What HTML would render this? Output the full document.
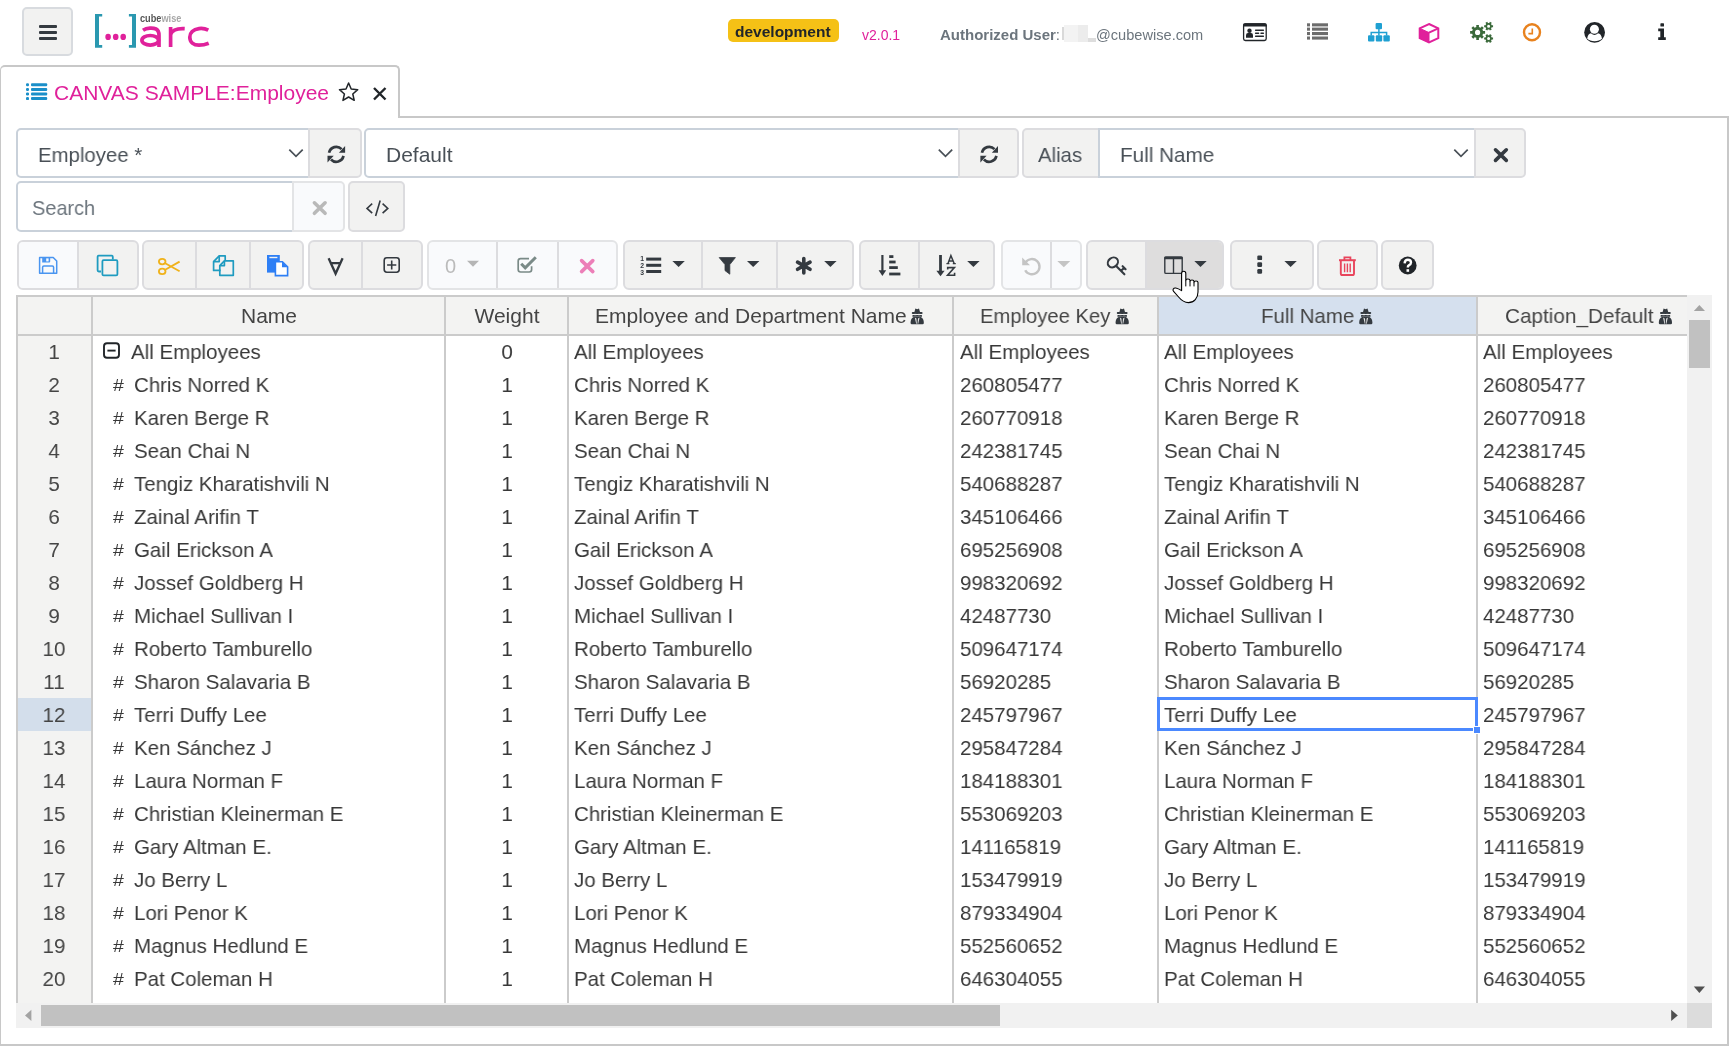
<!DOCTYPE html>
<html><head><meta charset="utf-8"><title>ARC</title>
<style>
*{box-sizing:border-box;margin:0;padding:0}
html,body{width:1734px;height:1056px;overflow:hidden;background:#fff;font-family:"Liberation Sans",sans-serif;color:#333}
.a{position:absolute}
svg{position:absolute;overflow:visible}
.btn{position:absolute;background:#f2f2f1;border:2px solid #dcdcdf;border-radius:5px}
.sel{position:absolute;background:#fff;border:2px solid #c9d1da;border-radius:5px}
.t{position:absolute;white-space:nowrap;line-height:1;will-change:transform}
.grp{position:absolute;top:240px;height:50px;border:2px solid #dcdcdf;border-radius:6px;background:#f2f2f1;overflow:hidden}
.grp.dis{background:#f9fafc;border-color:#e3e4e6}
.sep{position:absolute;top:0;bottom:0;width:2px;background:#dcdcdf}
.grid{position:absolute;left:16px;top:295px;width:1671px;height:708px;overflow:hidden;background:#fff}
.row{position:absolute;left:0;height:33px;width:1671px;line-height:33px;font-size:20px;color:#333;white-space:nowrap}
.row span{position:absolute;top:0}
.hdr{position:absolute;top:2px;height:37px;line-height:37px;font-size:20px;color:#444;text-align:center;background:#f3f3f2;white-space:nowrap}
.vl{position:absolute;top:0;width:2px;height:708px;background:#cbcbcb}
</style></head><body>
<div class="a" style="left:22px;top:7px;width:51px;height:49px;background:#f2f2f1;border:2px solid #d8dbdf;border-radius:5px"></div>
<div class="a" style="left:728px;top:19px;width:111px;height:23px;background:#f5c116;border-radius:5px"></div>
<div class="t" style="left:735px;top:23.68px;font-size:15.5px;color:#212529;font-weight:bold;">development</div>
<div class="t" style="left:861.5px;top:28.15px;font-size:14px;color:#e0219b;font-weight:normal;">v2.0.1</div>
<div class="t" style="left:940px;top:27.30px;font-size:15px;color:#6c757d;font-weight:bold;">Authorized User<span style="font-weight:normal">:</span></div>
<div class="a" style="left:1062px;top:27px;width:2px;height:13px;background:#d9d9d9;"></div>
<div class="a" style="left:1064px;top:25px;width:14px;height:17px;background:#f3f3f3;"></div>
<div class="a" style="left:1078px;top:25px;width:10px;height:17px;background:#ececec;"></div>
<div class="a" style="left:1088px;top:38px;width:8px;height:4px;background:#dddddd;"></div>
<div class="t" style="left:1096px;top:27.64px;font-size:14.6px;color:#6c757d;font-weight:normal;">@cubewise.com</div>
<div class="a" style="left:0px;top:116px;width:1729px;height:930px;background:#fff;border:2px solid #c8c8c8;border-left-width:1px"></div>
<div class="a" style="left:0px;top:65px;width:400px;height:53px;background:#fff;border:2px solid #c8c8c8;border-left-width:1px;border-bottom:none;border-radius:5px 5px 0 0"></div>
<div class="t" style="left:54px;top:81.82px;font-size:21px;color:#e0219b;font-weight:normal;">CANVAS SAMPLE:Employee</div>
<div class="a" style="left:16px;top:128px;width:294px;height:50px;background:#fff;border:2px solid #c9d1da;border-radius:5px 0 0 5px"></div>
<div class="t" style="left:38px;top:144.22px;font-size:21px;color:#495057;font-weight:normal;transform:scaleX(0.97);transform-origin:0 0">Employee *</div>
<div class="a" style="left:308px;top:128px;width:54px;height:50px;background:#f2f2f1;border:2px solid #dcdcdf;border-radius:0 5px 5px 0"></div>
<div class="a" style="left:364px;top:128px;width:596px;height:50px;background:#fff;border:2px solid #c9d1da;border-radius:5px 0 0 5px"></div>
<div class="t" style="left:386px;top:144.22px;font-size:21px;color:#495057;font-weight:normal;">Default</div>
<div class="a" style="left:958px;top:128px;width:61px;height:50px;background:#f2f2f1;border:2px solid #dcdcdf;border-radius:0 5px 5px 0"></div>
<div class="a" style="left:1022px;top:128px;width:78px;height:50px;background:#f2f2f1;border:2px solid #dcdcdf;border-radius:5px 0 0 5px"></div>
<div class="t" style="left:1038px;top:144.22px;font-size:21px;color:#495057;font-weight:normal;transform:scaleX(0.97);transform-origin:0 0">Alias</div>
<div class="a" style="left:1098px;top:128px;width:378px;height:50px;background:#fff;border:2px solid #c9d1da"></div>
<div class="t" style="left:1120px;top:144.22px;font-size:21px;color:#495057;font-weight:normal;transform:scaleX(0.985);transform-origin:0 0">Full Name</div>
<div class="a" style="left:1474px;top:128px;width:52px;height:50px;background:#f2f2f1;border:2px solid #dcdcdf;border-radius:0 5px 5px 0"></div>
<div class="a" style="left:16px;top:181px;width:278px;height:51px;background:#fff;border:2px solid #c9d1da;border-radius:5px 0 0 5px"></div>
<div class="t" style="left:31.5px;top:196.92px;font-size:21px;color:#6c757d;font-weight:normal;transform:scaleX(0.95);transform-origin:0 0">Search</div>
<div class="a" style="left:292px;top:181px;width:53px;height:51px;background:#f9fafc;border:2px solid #e3e4e6;border-radius:0 5px 5px 0"></div>
<div class="a" style="left:348px;top:181px;width:57px;height:51px;background:#f2f2f1;border:2px solid #dcdcdf;border-radius:5px"></div>
<div class="grp" style="left:17px;width:122px"><div class="a" style="left:0;top:0;width:58px;bottom:0;background:#f9fafc"></div><div class="sep" style="left:58px"></div></div>
<div class="grp" style="left:142px;width:162px"><div class="sep" style="left:51px"></div><div class="sep" style="left:105px"></div></div>
<div class="grp" style="left:308px;width:115px"><div class="sep" style="left:51px"></div></div>
<div class="grp dis" style="left:427px;width:191px"><div class="sep" style="left:67px"></div><div class="sep" style="left:128px"></div></div>
<div class="grp" style="left:623px;width:231px"><div class="sep" style="left:76px"></div><div class="sep" style="left:151px"></div></div>
<div class="grp" style="left:859px;width:136px"><div class="sep" style="left:57px"></div></div>
<div class="grp dis" style="left:1001px;width:81px"><div class="sep" style="left:47px"></div></div>
<div class="grp" style="left:1086px;width:138px"><div class="a" style="left:58px;top:0;right:0;bottom:0;background:#dedddd"></div><div class="sep" style="left:57px"></div></div>
<div class="grp" style="left:1230px;width:84px"></div>
<div class="grp" style="left:1317px;width:61px"></div>
<div class="grp" style="left:1381px;width:53px"></div>
<div class="t" style="left:444.6px;top:256.47px;font-size:20px;color:#bbb;font-weight:normal;">0</div>
<div class="grid"><div class="a" style="left:0;top:0;width:1671px;height:41px;background:#f3f3f2"></div>
<div class="a" style="left:1143px;top:2px;width:317px;height:37px;background:#d5e0ee"></div>
<div class="a" style="left:0;top:0;width:76px;height:708px;background:#f3f3f2"></div>
<div class="a" style="left:2px;top:403px;width:73px;height:33px;background:#d3deeb"></div>
<div class="a" style="left:0;top:0;width:1671px;height:2px;background:#cbcbcb"></div>
<div class="a" style="left:0;top:39px;width:1671px;height:2px;background:#cbcbcb"></div>
<div class="vl" style="left:0"></div>
<div class="vl" style="left:75px"></div>
<div class="vl" style="left:428px"></div>
<div class="vl" style="left:551px"></div>
<div class="vl" style="left:936px"></div>
<div class="vl" style="left:1141px"></div>
<div class="vl" style="left:1460px"></div></div>
<div id="gt"><div class="t" style="left:-31.5px;width:600px;text-align:center;top:305.02px;font-size:21px;color:#444;font-weight:normal;">Name</div>
<div class="t" style="left:206.5px;width:600px;text-align:center;top:305.02px;font-size:21px;color:#444;font-weight:normal;">Weight</div>
<div class="t" style="left:594.5px;top:305.02px;font-size:21px;color:#444;font-weight:normal;">Employee and Department Name</div>
<div class="t" style="left:979.6px;top:305.02px;font-size:21px;color:#444;font-weight:normal;transform:scaleX(0.962);transform-origin:0 0">Employee Key</div>
<div class="t" style="left:1260.5px;top:305.02px;font-size:21px;color:#444;font-weight:normal;transform:scaleX(0.975);transform-origin:0 0">Full Name</div>
<div class="t" style="left:1504.8px;top:305.02px;font-size:21px;color:#444;font-weight:normal;transform:scaleX(0.987);transform-origin:0 0">Caption_Default</div>
<div class="t" style="left:-246px;width:600px;text-align:center;top:340.82px;font-size:21px;color:#444;font-weight:normal;transform:scaleX(0.975)">1</div>
<div class="t" style="left:131px;top:340.82px;font-size:21px;color:#383838;font-weight:normal;transform:scaleX(0.975);transform-origin:0 0">All Employees</div>
<div class="t" style="left:206.5px;width:600px;text-align:center;top:340.82px;font-size:21px;color:#383838;font-weight:normal;transform:scaleX(0.975)">0</div>
<div class="t" style="left:574px;top:340.82px;font-size:21px;color:#383838;font-weight:normal;transform:scaleX(0.975);transform-origin:0 0">All Employees</div>
<div class="t" style="left:959.8px;top:340.82px;font-size:21px;color:#383838;font-weight:normal;transform:scaleX(0.975);transform-origin:0 0">All Employees</div>
<div class="t" style="left:1163.8px;top:340.82px;font-size:21px;color:#383838;font-weight:normal;transform:scaleX(0.975);transform-origin:0 0">All Employees</div>
<div class="t" style="left:1482.8px;top:340.82px;font-size:21px;color:#383838;font-weight:normal;transform:scaleX(0.975);transform-origin:0 0">All Employees</div>
<div class="t" style="left:-246px;width:600px;text-align:center;top:373.82px;font-size:21px;color:#444;font-weight:normal;transform:scaleX(0.975)">2</div>
<div class="t" style="left:112.6px;top:377.33px;font-size:16.5px;color:#383838;font-weight:normal;transform:scaleX(1.18);transform-origin:0 0">#</div>
<div class="t" style="left:134.4px;top:373.82px;font-size:21px;color:#383838;font-weight:normal;transform:scaleX(0.975);transform-origin:0 0">Chris Norred K</div>
<div class="t" style="left:206.5px;width:600px;text-align:center;top:373.82px;font-size:21px;color:#383838;font-weight:normal;transform:scaleX(0.975)">1</div>
<div class="t" style="left:574px;top:373.82px;font-size:21px;color:#383838;font-weight:normal;transform:scaleX(0.975);transform-origin:0 0">Chris Norred K</div>
<div class="t" style="left:959.8px;top:373.82px;font-size:21px;color:#383838;font-weight:normal;transform:scaleX(0.975);transform-origin:0 0">260805477</div>
<div class="t" style="left:1163.8px;top:373.82px;font-size:21px;color:#383838;font-weight:normal;transform:scaleX(0.975);transform-origin:0 0">Chris Norred K</div>
<div class="t" style="left:1482.8px;top:373.82px;font-size:21px;color:#383838;font-weight:normal;transform:scaleX(0.975);transform-origin:0 0">260805477</div>
<div class="t" style="left:-246px;width:600px;text-align:center;top:406.82px;font-size:21px;color:#444;font-weight:normal;transform:scaleX(0.975)">3</div>
<div class="t" style="left:112.6px;top:410.33px;font-size:16.5px;color:#383838;font-weight:normal;transform:scaleX(1.18);transform-origin:0 0">#</div>
<div class="t" style="left:134.4px;top:406.82px;font-size:21px;color:#383838;font-weight:normal;transform:scaleX(0.975);transform-origin:0 0">Karen Berge R</div>
<div class="t" style="left:206.5px;width:600px;text-align:center;top:406.82px;font-size:21px;color:#383838;font-weight:normal;transform:scaleX(0.975)">1</div>
<div class="t" style="left:574px;top:406.82px;font-size:21px;color:#383838;font-weight:normal;transform:scaleX(0.975);transform-origin:0 0">Karen Berge R</div>
<div class="t" style="left:959.8px;top:406.82px;font-size:21px;color:#383838;font-weight:normal;transform:scaleX(0.975);transform-origin:0 0">260770918</div>
<div class="t" style="left:1163.8px;top:406.82px;font-size:21px;color:#383838;font-weight:normal;transform:scaleX(0.975);transform-origin:0 0">Karen Berge R</div>
<div class="t" style="left:1482.8px;top:406.82px;font-size:21px;color:#383838;font-weight:normal;transform:scaleX(0.975);transform-origin:0 0">260770918</div>
<div class="t" style="left:-246px;width:600px;text-align:center;top:439.82px;font-size:21px;color:#444;font-weight:normal;transform:scaleX(0.975)">4</div>
<div class="t" style="left:112.6px;top:443.33px;font-size:16.5px;color:#383838;font-weight:normal;transform:scaleX(1.18);transform-origin:0 0">#</div>
<div class="t" style="left:134.4px;top:439.82px;font-size:21px;color:#383838;font-weight:normal;transform:scaleX(0.975);transform-origin:0 0">Sean Chai N</div>
<div class="t" style="left:206.5px;width:600px;text-align:center;top:439.82px;font-size:21px;color:#383838;font-weight:normal;transform:scaleX(0.975)">1</div>
<div class="t" style="left:574px;top:439.82px;font-size:21px;color:#383838;font-weight:normal;transform:scaleX(0.975);transform-origin:0 0">Sean Chai N</div>
<div class="t" style="left:959.8px;top:439.82px;font-size:21px;color:#383838;font-weight:normal;transform:scaleX(0.975);transform-origin:0 0">242381745</div>
<div class="t" style="left:1163.8px;top:439.82px;font-size:21px;color:#383838;font-weight:normal;transform:scaleX(0.975);transform-origin:0 0">Sean Chai N</div>
<div class="t" style="left:1482.8px;top:439.82px;font-size:21px;color:#383838;font-weight:normal;transform:scaleX(0.975);transform-origin:0 0">242381745</div>
<div class="t" style="left:-246px;width:600px;text-align:center;top:472.82px;font-size:21px;color:#444;font-weight:normal;transform:scaleX(0.975)">5</div>
<div class="t" style="left:112.6px;top:476.33px;font-size:16.5px;color:#383838;font-weight:normal;transform:scaleX(1.18);transform-origin:0 0">#</div>
<div class="t" style="left:134.4px;top:472.82px;font-size:21px;color:#383838;font-weight:normal;transform:scaleX(0.975);transform-origin:0 0">Tengiz Kharatishvili N</div>
<div class="t" style="left:206.5px;width:600px;text-align:center;top:472.82px;font-size:21px;color:#383838;font-weight:normal;transform:scaleX(0.975)">1</div>
<div class="t" style="left:574px;top:472.82px;font-size:21px;color:#383838;font-weight:normal;transform:scaleX(0.975);transform-origin:0 0">Tengiz Kharatishvili N</div>
<div class="t" style="left:959.8px;top:472.82px;font-size:21px;color:#383838;font-weight:normal;transform:scaleX(0.975);transform-origin:0 0">540688287</div>
<div class="t" style="left:1163.8px;top:472.82px;font-size:21px;color:#383838;font-weight:normal;transform:scaleX(0.975);transform-origin:0 0">Tengiz Kharatishvili N</div>
<div class="t" style="left:1482.8px;top:472.82px;font-size:21px;color:#383838;font-weight:normal;transform:scaleX(0.975);transform-origin:0 0">540688287</div>
<div class="t" style="left:-246px;width:600px;text-align:center;top:505.82px;font-size:21px;color:#444;font-weight:normal;transform:scaleX(0.975)">6</div>
<div class="t" style="left:112.6px;top:509.33px;font-size:16.5px;color:#383838;font-weight:normal;transform:scaleX(1.18);transform-origin:0 0">#</div>
<div class="t" style="left:134.4px;top:505.82px;font-size:21px;color:#383838;font-weight:normal;transform:scaleX(0.975);transform-origin:0 0">Zainal Arifin T</div>
<div class="t" style="left:206.5px;width:600px;text-align:center;top:505.82px;font-size:21px;color:#383838;font-weight:normal;transform:scaleX(0.975)">1</div>
<div class="t" style="left:574px;top:505.82px;font-size:21px;color:#383838;font-weight:normal;transform:scaleX(0.975);transform-origin:0 0">Zainal Arifin T</div>
<div class="t" style="left:959.8px;top:505.82px;font-size:21px;color:#383838;font-weight:normal;transform:scaleX(0.975);transform-origin:0 0">345106466</div>
<div class="t" style="left:1163.8px;top:505.82px;font-size:21px;color:#383838;font-weight:normal;transform:scaleX(0.975);transform-origin:0 0">Zainal Arifin T</div>
<div class="t" style="left:1482.8px;top:505.82px;font-size:21px;color:#383838;font-weight:normal;transform:scaleX(0.975);transform-origin:0 0">345106466</div>
<div class="t" style="left:-246px;width:600px;text-align:center;top:538.82px;font-size:21px;color:#444;font-weight:normal;transform:scaleX(0.975)">7</div>
<div class="t" style="left:112.6px;top:542.33px;font-size:16.5px;color:#383838;font-weight:normal;transform:scaleX(1.18);transform-origin:0 0">#</div>
<div class="t" style="left:134.4px;top:538.82px;font-size:21px;color:#383838;font-weight:normal;transform:scaleX(0.975);transform-origin:0 0">Gail Erickson A</div>
<div class="t" style="left:206.5px;width:600px;text-align:center;top:538.82px;font-size:21px;color:#383838;font-weight:normal;transform:scaleX(0.975)">1</div>
<div class="t" style="left:574px;top:538.82px;font-size:21px;color:#383838;font-weight:normal;transform:scaleX(0.975);transform-origin:0 0">Gail Erickson A</div>
<div class="t" style="left:959.8px;top:538.82px;font-size:21px;color:#383838;font-weight:normal;transform:scaleX(0.975);transform-origin:0 0">695256908</div>
<div class="t" style="left:1163.8px;top:538.82px;font-size:21px;color:#383838;font-weight:normal;transform:scaleX(0.975);transform-origin:0 0">Gail Erickson A</div>
<div class="t" style="left:1482.8px;top:538.82px;font-size:21px;color:#383838;font-weight:normal;transform:scaleX(0.975);transform-origin:0 0">695256908</div>
<div class="t" style="left:-246px;width:600px;text-align:center;top:571.82px;font-size:21px;color:#444;font-weight:normal;transform:scaleX(0.975)">8</div>
<div class="t" style="left:112.6px;top:575.33px;font-size:16.5px;color:#383838;font-weight:normal;transform:scaleX(1.18);transform-origin:0 0">#</div>
<div class="t" style="left:134.4px;top:571.82px;font-size:21px;color:#383838;font-weight:normal;transform:scaleX(0.975);transform-origin:0 0">Jossef Goldberg H</div>
<div class="t" style="left:206.5px;width:600px;text-align:center;top:571.82px;font-size:21px;color:#383838;font-weight:normal;transform:scaleX(0.975)">1</div>
<div class="t" style="left:574px;top:571.82px;font-size:21px;color:#383838;font-weight:normal;transform:scaleX(0.975);transform-origin:0 0">Jossef Goldberg H</div>
<div class="t" style="left:959.8px;top:571.82px;font-size:21px;color:#383838;font-weight:normal;transform:scaleX(0.975);transform-origin:0 0">998320692</div>
<div class="t" style="left:1163.8px;top:571.82px;font-size:21px;color:#383838;font-weight:normal;transform:scaleX(0.975);transform-origin:0 0">Jossef Goldberg H</div>
<div class="t" style="left:1482.8px;top:571.82px;font-size:21px;color:#383838;font-weight:normal;transform:scaleX(0.975);transform-origin:0 0">998320692</div>
<div class="t" style="left:-246px;width:600px;text-align:center;top:604.82px;font-size:21px;color:#444;font-weight:normal;transform:scaleX(0.975)">9</div>
<div class="t" style="left:112.6px;top:608.33px;font-size:16.5px;color:#383838;font-weight:normal;transform:scaleX(1.18);transform-origin:0 0">#</div>
<div class="t" style="left:134.4px;top:604.82px;font-size:21px;color:#383838;font-weight:normal;transform:scaleX(0.975);transform-origin:0 0">Michael Sullivan I</div>
<div class="t" style="left:206.5px;width:600px;text-align:center;top:604.82px;font-size:21px;color:#383838;font-weight:normal;transform:scaleX(0.975)">1</div>
<div class="t" style="left:574px;top:604.82px;font-size:21px;color:#383838;font-weight:normal;transform:scaleX(0.975);transform-origin:0 0">Michael Sullivan I</div>
<div class="t" style="left:959.8px;top:604.82px;font-size:21px;color:#383838;font-weight:normal;transform:scaleX(0.975);transform-origin:0 0">42487730</div>
<div class="t" style="left:1163.8px;top:604.82px;font-size:21px;color:#383838;font-weight:normal;transform:scaleX(0.975);transform-origin:0 0">Michael Sullivan I</div>
<div class="t" style="left:1482.8px;top:604.82px;font-size:21px;color:#383838;font-weight:normal;transform:scaleX(0.975);transform-origin:0 0">42487730</div>
<div class="t" style="left:-246px;width:600px;text-align:center;top:637.82px;font-size:21px;color:#444;font-weight:normal;transform:scaleX(0.975)">10</div>
<div class="t" style="left:112.6px;top:641.33px;font-size:16.5px;color:#383838;font-weight:normal;transform:scaleX(1.18);transform-origin:0 0">#</div>
<div class="t" style="left:134.4px;top:637.82px;font-size:21px;color:#383838;font-weight:normal;transform:scaleX(0.975);transform-origin:0 0">Roberto Tamburello</div>
<div class="t" style="left:206.5px;width:600px;text-align:center;top:637.82px;font-size:21px;color:#383838;font-weight:normal;transform:scaleX(0.975)">1</div>
<div class="t" style="left:574px;top:637.82px;font-size:21px;color:#383838;font-weight:normal;transform:scaleX(0.975);transform-origin:0 0">Roberto Tamburello</div>
<div class="t" style="left:959.8px;top:637.82px;font-size:21px;color:#383838;font-weight:normal;transform:scaleX(0.975);transform-origin:0 0">509647174</div>
<div class="t" style="left:1163.8px;top:637.82px;font-size:21px;color:#383838;font-weight:normal;transform:scaleX(0.975);transform-origin:0 0">Roberto Tamburello</div>
<div class="t" style="left:1482.8px;top:637.82px;font-size:21px;color:#383838;font-weight:normal;transform:scaleX(0.975);transform-origin:0 0">509647174</div>
<div class="t" style="left:-246px;width:600px;text-align:center;top:670.82px;font-size:21px;color:#444;font-weight:normal;transform:scaleX(0.975)">11</div>
<div class="t" style="left:112.6px;top:674.33px;font-size:16.5px;color:#383838;font-weight:normal;transform:scaleX(1.18);transform-origin:0 0">#</div>
<div class="t" style="left:134.4px;top:670.82px;font-size:21px;color:#383838;font-weight:normal;transform:scaleX(0.975);transform-origin:0 0">Sharon Salavaria B</div>
<div class="t" style="left:206.5px;width:600px;text-align:center;top:670.82px;font-size:21px;color:#383838;font-weight:normal;transform:scaleX(0.975)">1</div>
<div class="t" style="left:574px;top:670.82px;font-size:21px;color:#383838;font-weight:normal;transform:scaleX(0.975);transform-origin:0 0">Sharon Salavaria B</div>
<div class="t" style="left:959.8px;top:670.82px;font-size:21px;color:#383838;font-weight:normal;transform:scaleX(0.975);transform-origin:0 0">56920285</div>
<div class="t" style="left:1163.8px;top:670.82px;font-size:21px;color:#383838;font-weight:normal;transform:scaleX(0.975);transform-origin:0 0">Sharon Salavaria B</div>
<div class="t" style="left:1482.8px;top:670.82px;font-size:21px;color:#383838;font-weight:normal;transform:scaleX(0.975);transform-origin:0 0">56920285</div>
<div class="t" style="left:-246px;width:600px;text-align:center;top:703.82px;font-size:21px;color:#444;font-weight:normal;transform:scaleX(0.975)">12</div>
<div class="t" style="left:112.6px;top:707.33px;font-size:16.5px;color:#383838;font-weight:normal;transform:scaleX(1.18);transform-origin:0 0">#</div>
<div class="t" style="left:134.4px;top:703.82px;font-size:21px;color:#383838;font-weight:normal;transform:scaleX(0.975);transform-origin:0 0">Terri Duffy Lee</div>
<div class="t" style="left:206.5px;width:600px;text-align:center;top:703.82px;font-size:21px;color:#383838;font-weight:normal;transform:scaleX(0.975)">1</div>
<div class="t" style="left:574px;top:703.82px;font-size:21px;color:#383838;font-weight:normal;transform:scaleX(0.975);transform-origin:0 0">Terri Duffy Lee</div>
<div class="t" style="left:959.8px;top:703.82px;font-size:21px;color:#383838;font-weight:normal;transform:scaleX(0.975);transform-origin:0 0">245797967</div>
<div class="t" style="left:1163.8px;top:703.82px;font-size:21px;color:#383838;font-weight:normal;transform:scaleX(0.975);transform-origin:0 0">Terri Duffy Lee</div>
<div class="t" style="left:1482.8px;top:703.82px;font-size:21px;color:#383838;font-weight:normal;transform:scaleX(0.975);transform-origin:0 0">245797967</div>
<div class="t" style="left:-246px;width:600px;text-align:center;top:736.82px;font-size:21px;color:#444;font-weight:normal;transform:scaleX(0.975)">13</div>
<div class="t" style="left:112.6px;top:740.33px;font-size:16.5px;color:#383838;font-weight:normal;transform:scaleX(1.18);transform-origin:0 0">#</div>
<div class="t" style="left:134.4px;top:736.82px;font-size:21px;color:#383838;font-weight:normal;transform:scaleX(0.975);transform-origin:0 0">Ken S&aacute;nchez J</div>
<div class="t" style="left:206.5px;width:600px;text-align:center;top:736.82px;font-size:21px;color:#383838;font-weight:normal;transform:scaleX(0.975)">1</div>
<div class="t" style="left:574px;top:736.82px;font-size:21px;color:#383838;font-weight:normal;transform:scaleX(0.975);transform-origin:0 0">Ken S&aacute;nchez J</div>
<div class="t" style="left:959.8px;top:736.82px;font-size:21px;color:#383838;font-weight:normal;transform:scaleX(0.975);transform-origin:0 0">295847284</div>
<div class="t" style="left:1163.8px;top:736.82px;font-size:21px;color:#383838;font-weight:normal;transform:scaleX(0.975);transform-origin:0 0">Ken S&aacute;nchez J</div>
<div class="t" style="left:1482.8px;top:736.82px;font-size:21px;color:#383838;font-weight:normal;transform:scaleX(0.975);transform-origin:0 0">295847284</div>
<div class="t" style="left:-246px;width:600px;text-align:center;top:769.82px;font-size:21px;color:#444;font-weight:normal;transform:scaleX(0.975)">14</div>
<div class="t" style="left:112.6px;top:773.33px;font-size:16.5px;color:#383838;font-weight:normal;transform:scaleX(1.18);transform-origin:0 0">#</div>
<div class="t" style="left:134.4px;top:769.82px;font-size:21px;color:#383838;font-weight:normal;transform:scaleX(0.975);transform-origin:0 0">Laura Norman F</div>
<div class="t" style="left:206.5px;width:600px;text-align:center;top:769.82px;font-size:21px;color:#383838;font-weight:normal;transform:scaleX(0.975)">1</div>
<div class="t" style="left:574px;top:769.82px;font-size:21px;color:#383838;font-weight:normal;transform:scaleX(0.975);transform-origin:0 0">Laura Norman F</div>
<div class="t" style="left:959.8px;top:769.82px;font-size:21px;color:#383838;font-weight:normal;transform:scaleX(0.975);transform-origin:0 0">184188301</div>
<div class="t" style="left:1163.8px;top:769.82px;font-size:21px;color:#383838;font-weight:normal;transform:scaleX(0.975);transform-origin:0 0">Laura Norman F</div>
<div class="t" style="left:1482.8px;top:769.82px;font-size:21px;color:#383838;font-weight:normal;transform:scaleX(0.975);transform-origin:0 0">184188301</div>
<div class="t" style="left:-246px;width:600px;text-align:center;top:802.82px;font-size:21px;color:#444;font-weight:normal;transform:scaleX(0.975)">15</div>
<div class="t" style="left:112.6px;top:806.33px;font-size:16.5px;color:#383838;font-weight:normal;transform:scaleX(1.18);transform-origin:0 0">#</div>
<div class="t" style="left:134.4px;top:802.82px;font-size:21px;color:#383838;font-weight:normal;transform:scaleX(0.975);transform-origin:0 0">Christian Kleinerman E</div>
<div class="t" style="left:206.5px;width:600px;text-align:center;top:802.82px;font-size:21px;color:#383838;font-weight:normal;transform:scaleX(0.975)">1</div>
<div class="t" style="left:574px;top:802.82px;font-size:21px;color:#383838;font-weight:normal;transform:scaleX(0.975);transform-origin:0 0">Christian Kleinerman E</div>
<div class="t" style="left:959.8px;top:802.82px;font-size:21px;color:#383838;font-weight:normal;transform:scaleX(0.975);transform-origin:0 0">553069203</div>
<div class="t" style="left:1163.8px;top:802.82px;font-size:21px;color:#383838;font-weight:normal;transform:scaleX(0.975);transform-origin:0 0">Christian Kleinerman E</div>
<div class="t" style="left:1482.8px;top:802.82px;font-size:21px;color:#383838;font-weight:normal;transform:scaleX(0.975);transform-origin:0 0">553069203</div>
<div class="t" style="left:-246px;width:600px;text-align:center;top:835.82px;font-size:21px;color:#444;font-weight:normal;transform:scaleX(0.975)">16</div>
<div class="t" style="left:112.6px;top:839.33px;font-size:16.5px;color:#383838;font-weight:normal;transform:scaleX(1.18);transform-origin:0 0">#</div>
<div class="t" style="left:134.4px;top:835.82px;font-size:21px;color:#383838;font-weight:normal;transform:scaleX(0.975);transform-origin:0 0">Gary Altman E.</div>
<div class="t" style="left:206.5px;width:600px;text-align:center;top:835.82px;font-size:21px;color:#383838;font-weight:normal;transform:scaleX(0.975)">1</div>
<div class="t" style="left:574px;top:835.82px;font-size:21px;color:#383838;font-weight:normal;transform:scaleX(0.975);transform-origin:0 0">Gary Altman E.</div>
<div class="t" style="left:959.8px;top:835.82px;font-size:21px;color:#383838;font-weight:normal;transform:scaleX(0.975);transform-origin:0 0">141165819</div>
<div class="t" style="left:1163.8px;top:835.82px;font-size:21px;color:#383838;font-weight:normal;transform:scaleX(0.975);transform-origin:0 0">Gary Altman E.</div>
<div class="t" style="left:1482.8px;top:835.82px;font-size:21px;color:#383838;font-weight:normal;transform:scaleX(0.975);transform-origin:0 0">141165819</div>
<div class="t" style="left:-246px;width:600px;text-align:center;top:868.82px;font-size:21px;color:#444;font-weight:normal;transform:scaleX(0.975)">17</div>
<div class="t" style="left:112.6px;top:872.33px;font-size:16.5px;color:#383838;font-weight:normal;transform:scaleX(1.18);transform-origin:0 0">#</div>
<div class="t" style="left:134.4px;top:868.82px;font-size:21px;color:#383838;font-weight:normal;transform:scaleX(0.975);transform-origin:0 0">Jo Berry L</div>
<div class="t" style="left:206.5px;width:600px;text-align:center;top:868.82px;font-size:21px;color:#383838;font-weight:normal;transform:scaleX(0.975)">1</div>
<div class="t" style="left:574px;top:868.82px;font-size:21px;color:#383838;font-weight:normal;transform:scaleX(0.975);transform-origin:0 0">Jo Berry L</div>
<div class="t" style="left:959.8px;top:868.82px;font-size:21px;color:#383838;font-weight:normal;transform:scaleX(0.975);transform-origin:0 0">153479919</div>
<div class="t" style="left:1163.8px;top:868.82px;font-size:21px;color:#383838;font-weight:normal;transform:scaleX(0.975);transform-origin:0 0">Jo Berry L</div>
<div class="t" style="left:1482.8px;top:868.82px;font-size:21px;color:#383838;font-weight:normal;transform:scaleX(0.975);transform-origin:0 0">153479919</div>
<div class="t" style="left:-246px;width:600px;text-align:center;top:901.82px;font-size:21px;color:#444;font-weight:normal;transform:scaleX(0.975)">18</div>
<div class="t" style="left:112.6px;top:905.33px;font-size:16.5px;color:#383838;font-weight:normal;transform:scaleX(1.18);transform-origin:0 0">#</div>
<div class="t" style="left:134.4px;top:901.82px;font-size:21px;color:#383838;font-weight:normal;transform:scaleX(0.975);transform-origin:0 0">Lori Penor K</div>
<div class="t" style="left:206.5px;width:600px;text-align:center;top:901.82px;font-size:21px;color:#383838;font-weight:normal;transform:scaleX(0.975)">1</div>
<div class="t" style="left:574px;top:901.82px;font-size:21px;color:#383838;font-weight:normal;transform:scaleX(0.975);transform-origin:0 0">Lori Penor K</div>
<div class="t" style="left:959.8px;top:901.82px;font-size:21px;color:#383838;font-weight:normal;transform:scaleX(0.975);transform-origin:0 0">879334904</div>
<div class="t" style="left:1163.8px;top:901.82px;font-size:21px;color:#383838;font-weight:normal;transform:scaleX(0.975);transform-origin:0 0">Lori Penor K</div>
<div class="t" style="left:1482.8px;top:901.82px;font-size:21px;color:#383838;font-weight:normal;transform:scaleX(0.975);transform-origin:0 0">879334904</div>
<div class="t" style="left:-246px;width:600px;text-align:center;top:934.82px;font-size:21px;color:#444;font-weight:normal;transform:scaleX(0.975)">19</div>
<div class="t" style="left:112.6px;top:938.33px;font-size:16.5px;color:#383838;font-weight:normal;transform:scaleX(1.18);transform-origin:0 0">#</div>
<div class="t" style="left:134.4px;top:934.82px;font-size:21px;color:#383838;font-weight:normal;transform:scaleX(0.975);transform-origin:0 0">Magnus Hedlund E</div>
<div class="t" style="left:206.5px;width:600px;text-align:center;top:934.82px;font-size:21px;color:#383838;font-weight:normal;transform:scaleX(0.975)">1</div>
<div class="t" style="left:574px;top:934.82px;font-size:21px;color:#383838;font-weight:normal;transform:scaleX(0.975);transform-origin:0 0">Magnus Hedlund E</div>
<div class="t" style="left:959.8px;top:934.82px;font-size:21px;color:#383838;font-weight:normal;transform:scaleX(0.975);transform-origin:0 0">552560652</div>
<div class="t" style="left:1163.8px;top:934.82px;font-size:21px;color:#383838;font-weight:normal;transform:scaleX(0.975);transform-origin:0 0">Magnus Hedlund E</div>
<div class="t" style="left:1482.8px;top:934.82px;font-size:21px;color:#383838;font-weight:normal;transform:scaleX(0.975);transform-origin:0 0">552560652</div>
<div class="t" style="left:-246px;width:600px;text-align:center;top:967.82px;font-size:21px;color:#444;font-weight:normal;transform:scaleX(0.975)">20</div>
<div class="t" style="left:112.6px;top:971.33px;font-size:16.5px;color:#383838;font-weight:normal;transform:scaleX(1.18);transform-origin:0 0">#</div>
<div class="t" style="left:134.4px;top:967.82px;font-size:21px;color:#383838;font-weight:normal;transform:scaleX(0.975);transform-origin:0 0">Pat Coleman H</div>
<div class="t" style="left:206.5px;width:600px;text-align:center;top:967.82px;font-size:21px;color:#383838;font-weight:normal;transform:scaleX(0.975)">1</div>
<div class="t" style="left:574px;top:967.82px;font-size:21px;color:#383838;font-weight:normal;transform:scaleX(0.975);transform-origin:0 0">Pat Coleman H</div>
<div class="t" style="left:959.8px;top:967.82px;font-size:21px;color:#383838;font-weight:normal;transform:scaleX(0.975);transform-origin:0 0">646304055</div>
<div class="t" style="left:1163.8px;top:967.82px;font-size:21px;color:#383838;font-weight:normal;transform:scaleX(0.975);transform-origin:0 0">Pat Coleman H</div>
<div class="t" style="left:1482.8px;top:967.82px;font-size:21px;color:#383838;font-weight:normal;transform:scaleX(0.975);transform-origin:0 0">646304055</div></div>
<div class="a" style="left:1157px;top:697px;width:321px;height:34px;background:transparent;border:3px solid #4b89ff"></div>
<div class="a" style="left:1473px;top:726px;width:8px;height:8px;background:#4b89ff;border:1px solid #fff"></div>
<div class="a" style="left:1687px;top:295px;width:25px;height:708px;background:#f1f1f1;"></div>
<div class="a" style="left:1689px;top:320px;width:21px;height:48px;background:#c1c1c1;"></div>
<div class="a" style="left:16px;top:1003px;width:1671px;height:25px;background:#f1f1f1;"></div>
<div class="a" style="left:41px;top:1005px;width:959px;height:21px;background:#c1c1c1;"></div>
<div class="a" style="left:1687px;top:1003px;width:25px;height:25px;background:#dcdcdc;"></div>
<svg class="a" style="left:0;top:0" width="1734" height="1056" viewBox="0 0 1734 1056"><rect x="39" y="25" width="18" height="3.1" rx="1" fill="#343a40"/>
<rect x="39" y="31" width="18" height="3.1" rx="1" fill="#343a40"/>
<rect x="39" y="37" width="18" height="3.1" rx="1" fill="#343a40"/>
<path d="M95,14H102.2V16.6H99V45.1H102.2V47.7H95Z" fill="#2a98b0"/>
<path d="M136,14H128.9V16.6H132V45.1H128.9V47.7H136Z" fill="#2a98b0"/>
<ellipse cx="108.1" cy="36.9" rx="2.8" ry="3.1" fill="#e0219b"/>
<ellipse cx="115.7" cy="36.9" rx="2.8" ry="3.1" fill="#e0219b"/>
<ellipse cx="123.2" cy="36.9" rx="2.8" ry="3.1" fill="#e0219b"/>
<text x="140" y="22.3" font-family="Liberation Sans" font-weight="bold" font-size="10.6" textLength="41.4" lengthAdjust="spacingAndGlyphs"><tspan fill="#555">cube</tspan><tspan fill="#a8a8a8">wise</tspan></text>
<g fill="none" stroke="#e0219b" stroke-width="3.7"><path d="M143,30.3C147,27.6 153,27.6 156,29C158.6,30.3 159,32.5 159,35.5V47"/><ellipse cx="150.2" cy="40.3" rx="8.3" ry="4.8"/><path d="M170.6,27V47"/><path d="M170.6,34C172.5,29.5 177,28.2 184.7,28.6"/><path d="M208.3,30.2C205,28.5 202,28.2 199,28.6C193,29.3 189.8,33 189.8,37.2C189.8,42 193.5,45.2 199,45.2C202.5,45.2 205.5,44.5 208.7,43.2"/></g>
<rect x="1243.6" y="23.9" width="22.6" height="16.6" rx="1.8" fill="none" stroke="#212529" stroke-width="1.3"/>
<path d="M1243,26.4V25.2Q1243,23.3 1245,23.3H1265Q1266.8,23.3 1266.8,25.2V26.4Z" fill="#212529"/>
<circle cx="1249.5" cy="30.8" r="2.2" fill="#212529"/>
<path d="M1246,37.8V35.2Q1246,33.1 1248,33.1H1251Q1253,33.1 1253,35.2V37.8Z" fill="#212529"/>
<g stroke="#212529" stroke-width="1.4" stroke-linecap="round"><path d="M1255.6,30.2H1263.4M1255.6,33.3H1258.6M1261,33.3H1263.4M1255.6,36.3H1263.4"/></g>
<rect x="1307" y="23.3" width="3" height="3.1" fill="#6c6c6c"/><rect x="1312" y="23.3" width="16" height="3.1" fill="#6c6c6c"/>
<rect x="1307" y="27.6" width="3" height="3.1" fill="#6c6c6c"/><rect x="1312" y="27.6" width="16" height="3.1" fill="#6c6c6c"/>
<rect x="1307" y="32.0" width="3" height="3.1" fill="#6c6c6c"/><rect x="1312" y="32.0" width="16" height="3.1" fill="#6c6c6c"/>
<rect x="1307" y="36.5" width="3" height="3.1" fill="#6c6c6c"/><rect x="1312" y="36.5" width="16" height="3.1" fill="#6c6c6c"/>
<rect x="1375.6" y="23" width="6.4" height="6.2" rx="1" fill="#1fa0d2"/>
<rect x="1368" y="35.3" width="6.4" height="6.2" rx="1" fill="#1fa0d2"/>
<rect x="1375.8" y="35.3" width="6.4" height="6.2" rx="1" fill="#1fa0d2"/>
<rect x="1383.4" y="35.3" width="6.4" height="6.2" rx="1" fill="#1fa0d2"/>
<path d="M1378.9,29V32.6M1371.2,35.5V32.6H1386.6V35.5M1378.9,32.6V35.5" fill="none" stroke="#1fa0d2" stroke-width="1.5"/>
<path d="M1429,24L1438.3,28.3V38.2L1429,42.3L1419.7,38.2V28.3Z" fill="none" stroke="#e0219b" stroke-width="2"/>
<path d="M1419.7,28.3L1429,32.6V42.3L1419.7,38.2Z" fill="#e0219b" stroke="#e0219b" stroke-width="1"/>
<path d="M1429,32.6L1438.3,28.3" stroke="#e0219b" stroke-width="2"/>
<path d="M1485.08,31.06 L1485.08,33.74 L1483.05,33.71 L1482.37,35.33 L1483.84,36.75 L1481.95,38.64 L1480.53,37.17 L1478.91,37.85 L1478.94,39.88 L1476.26,39.88 L1476.29,37.85 L1474.67,37.17 L1473.25,38.64 L1471.36,36.75 L1472.83,35.33 L1472.15,33.71 L1470.12,33.74 L1470.12,31.06 L1472.15,31.09 L1472.83,29.47 L1471.36,28.05 L1473.25,26.16 L1474.67,27.63 L1476.29,26.95 L1476.26,24.92 L1478.94,24.92 L1478.91,26.95 L1480.53,27.63 L1481.95,26.16 L1483.84,28.05 L1482.37,29.47 L1483.05,31.09Z M1480.1999999999998,32.4 A2.6,2.6 0 1,0 1475.0,32.4 A2.6,2.6 0 1,0 1480.1999999999998,32.4Z" fill="#3b6a3b" fill-rule="evenodd"/>
<path d="M1493.07,25.13 L1493.07,27.27 L1491.74,27.22 L1491.05,28.41 L1491.77,29.54 L1489.91,30.61 L1489.29,29.43 L1487.91,29.43 L1487.29,30.61 L1485.43,29.54 L1486.15,28.41 L1485.46,27.22 L1484.13,27.27 L1484.13,25.13 L1485.46,25.18 L1486.15,23.99 L1485.43,22.86 L1487.29,21.79 L1487.91,22.97 L1489.29,22.97 L1489.91,21.79 L1491.77,22.86 L1491.05,23.99 L1491.74,25.18Z M1490.1,26.2 A1.5,1.5 0 1,0 1487.1,26.2 A1.5,1.5 0 1,0 1490.1,26.2Z" fill="#3b6a3b" fill-rule="evenodd"/>
<path d="M1493.07,37.43 L1493.07,39.57 L1491.74,39.52 L1491.05,40.71 L1491.77,41.84 L1489.91,42.91 L1489.29,41.73 L1487.91,41.73 L1487.29,42.91 L1485.43,41.84 L1486.15,40.71 L1485.46,39.52 L1484.13,39.57 L1484.13,37.43 L1485.46,37.48 L1486.15,36.29 L1485.43,35.16 L1487.29,34.09 L1487.91,35.27 L1489.29,35.27 L1489.91,34.09 L1491.77,35.16 L1491.05,36.29 L1491.74,37.48Z M1490.1,38.5 A1.5,1.5 0 1,0 1487.1,38.5 A1.5,1.5 0 1,0 1490.1,38.5Z" fill="#3b6a3b" fill-rule="evenodd"/>
<circle cx="1532" cy="32.2" r="8" fill="none" stroke="#e8821e" stroke-width="2.4"/>
<path d="M1532.3,28.5V33.6H1528.4" fill="none" stroke="#e8821e" stroke-width="1.6"/>
<circle cx="1594.6" cy="32.4" r="10.4" fill="#212529"/>
<circle cx="1594.4" cy="29.3" r="4.5" fill="#fff"/>
<path d="M1587.2,38.8C1587.6,35.4 1589,33.4 1591,33.2C1592.4,34.3 1593.4,34.9 1594.5,34.9C1595.6,34.9 1596.6,34.3 1598,33.2C1600,33.4 1601.6,35.4 1602,38.8C1600.4,40.4 1597.6,41.3 1594.6,41.3C1591.6,41.3 1588.8,40.4 1587.2,38.8Z" fill="#fff"/>
<rect x="1660.4" y="23.3" width="3.6" height="3.3" rx="0.6" fill="#212529"/>
<path d="M1658.2,28.6H1664V37.3H1665.8V40H1658.2V37.3H1660.3V31.2H1658.2Z" fill="#212529"/>
<rect x="26" y="83.2" width="3" height="3.1" rx="1.2" fill="#1a8fc9"/><rect x="31" y="83.2" width="16.2" height="3.1" rx="1" fill="#1a8fc9"/>
<rect x="26" y="87.9" width="3" height="3.1" rx="1.2" fill="#1a8fc9"/><rect x="31" y="87.9" width="16.2" height="3.1" rx="1" fill="#1a8fc9"/>
<rect x="26" y="92.4" width="3" height="3.1" rx="1.2" fill="#1a8fc9"/><rect x="31" y="92.4" width="16.2" height="3.1" rx="1" fill="#1a8fc9"/>
<rect x="26" y="97.0" width="3" height="3.1" rx="1.2" fill="#1a8fc9"/><rect x="31" y="97.0" width="16.2" height="3.1" rx="1" fill="#1a8fc9"/>
<path d="M348.60,83.00 L351.19,89.04 L357.73,89.63 L352.78,93.96 L354.24,100.37 L348.60,97.00 L342.96,100.37 L344.42,93.96 L339.47,89.63 L346.01,89.04Z" fill="none" stroke="#212529" stroke-width="1.5" stroke-linejoin="round"/>
<path d="M374,88L385.5,99.5M385.5,88L374,99.5" stroke="#212529" stroke-width="2.4"/>
<path d="M289.3,149.6L296.0,156.3L302.7,149.6" fill="none" stroke="#495057" stroke-width="1.7"/>
<path d="M938.8,149.6L945.5,156.3L952.1999999999999,149.6" fill="none" stroke="#495057" stroke-width="1.7"/>
<path d="M1454.3,149.6L1461.0,156.3L1467.7,149.6" fill="none" stroke="#495057" stroke-width="1.7"/>
<path d="M329.08,152.7A7.4,7.4 0 0,1 341.6,149.10000000000002" fill="none" stroke="#343a40" stroke-width="2.7"/>
<path d="M338.90000000000003,152.8H345.1V146.1Z" fill="#343a40"/>
<path d="M343.52000000000004,155.9A7.4,7.4 0 0,1 331.0,159.5" fill="none" stroke="#343a40" stroke-width="2.7"/>
<path d="M333.7,155.8H327.5V162.5Z" fill="#343a40"/>
<path d="M981.98,152.7A7.4,7.4 0 0,1 994.5,149.10000000000002" fill="none" stroke="#343a40" stroke-width="2.7"/>
<path d="M991.8000000000001,152.8H998.0V146.1Z" fill="#343a40"/>
<path d="M996.4200000000001,155.9A7.4,7.4 0 0,1 983.9000000000001,159.5" fill="none" stroke="#343a40" stroke-width="2.7"/>
<path d="M986.6,155.8H980.4000000000001V162.5Z" fill="#343a40"/>
<path d="M1495.5,149.8L1506.3,160.4M1506.3,149.8L1495.5,160.4" stroke="#343a40" stroke-width="3.6" stroke-linecap="round"/>
<path d="M314.4,202.8L325.1,213.3M325.1,202.8L314.4,213.3" stroke="#b9b9b9" stroke-width="3.6" stroke-linecap="round"/>
<path d="M372.2,203.6L367,208.4L372.2,213.2M382.6,203.6L387.8,208.4L382.6,213.2M380.2,200.6L375.6,216" fill="none" stroke="#343a40" stroke-width="1.6"/><path d="M39.6,257.4H53.2L56.7,261V273.3H39.6Z" fill="none" stroke="#4a95f0" stroke-width="1.5" stroke-linejoin="round"/>
<path d="M42.2,257.6H50.2V261.5Q50.2,262.6 49.1,262.6H42.2Z" fill="#4a95f0"/>
<rect x="46.2" y="258.4" width="2.4" height="3" fill="#f9fafc"/>
<path d="M42.6,273.3V267.2Q42.6,265.9 43.9,265.9H52.3Q53.6,265.9 53.6,267.2V273.3" fill="none" stroke="#4a95f0" stroke-width="1.5"/>
<path d="M101,271.5H98.8Q97.6,271.5 97.6,270.3V256.8Q97.6,255.6 98.8,255.6H111.6Q112.8,255.6 112.8,256.8V259.4" fill="none" stroke="#1f9bc0" stroke-width="1.8"/>
<rect x="102.4" y="260.2" width="15" height="15.2" rx="1.2" fill="none" stroke="#1f9bc0" stroke-width="1.8"/>
<g fill="none" stroke="#f0b21a" stroke-width="1.8"><ellipse cx="162.2" cy="261.6" rx="3.3" ry="2.7"/><ellipse cx="162.2" cy="271.4" rx="3.3" ry="2.7"/><path d="M165.2,263.2L179.6,271.2M165.2,269.8L179.6,261.6"/></g>
<g fill="none" stroke="#1f9bc0" stroke-width="1.7" stroke-linejoin="round"><path d="M220.6,270.4H213.6V261.6L219.2,255.8H225.2V260.2"/><path d="M213.6,261.6H219.2V255.8"/><path d="M219.8,265.6L224.4,260.8H233.3V275.3H219.8Z"/><path d="M219.8,265.6H224.4V260.8"/></g>
<rect x="267" y="255" width="12.8" height="17.6" fill="#2e7ff5"/>
<rect x="269.4" y="256.8" width="8" height="1.4" fill="#f2f2f1"/>
<path d="M275.4,261.8H282.4L287.6,266.8V275.6H275.4Z" fill="#fff" stroke="#2e7ff5" stroke-width="1.6"/>
<path d="M282,262V267.2H287.4Z" fill="#2e7ff5"/>
<path d="M328.6,258.2L335.6,273.6L342.6,258.2M330.9,263.2H340.3" fill="none" stroke="#343a40" stroke-width="2.3"/>
<rect x="384.2" y="257.8" width="15" height="14.4" rx="2.6" fill="none" stroke="#343a40" stroke-width="1.6"/>
<path d="M391.7,260.4V269.6M387.1,265H396.3" stroke="#343a40" stroke-width="1.6"/>
<path d="M467,260.8H479L473.0,266.8Z" fill="#b5b5b5"/>
<path d="M531.6,266.2V269.6Q531.6,272 529.2,272H520.6Q518.2,272 518.2,269.6V261Q518.2,258.6 520.6,258.6H529" fill="none" stroke="#7a8a87" stroke-width="1.7"/>
<path d="M521.2,263.8L525.2,267.8L535.8,257.2" fill="none" stroke="#7a8a87" stroke-width="3"/>
<path d="M581.6,260.6L592.8,271.6M592.8,260.6L581.6,271.6" stroke="#ec7fb8" stroke-width="3.6" stroke-linecap="round"/>
<rect x="646.2" y="257.6" width="15" height="3" fill="#343a40"/><rect x="646.2" y="263.8" width="15" height="3" fill="#343a40"/><rect x="646.2" y="270" width="15" height="3" fill="#343a40"/>
<text font-family="Liberation Sans" font-size="6.8" fill="#343a40" font-weight="bold"><tspan x="640.2" y="261.2">1</tspan><tspan x="640.2" y="268">2</tspan><tspan x="640.2" y="275">3</tspan></text>
<path d="M672.4,260.9H684.8L678.6,267.09999999999997Z" fill="#343a40"/>
<path d="M719.2,257.6H735.4L729.8,264.6V274.2L725,270.6V264.6Z" fill="#343a40" stroke="#343a40" stroke-width="0.8" stroke-linejoin="round"/>
<path d="M747,260.9H759.4L753.2,267.09999999999997Z" fill="#343a40"/>
<path d="M803.80,258.50L803.80,272.90M797.56,262.10L810.04,269.30M810.04,262.10L797.56,269.30" stroke="#343a40" stroke-width="3.6" stroke-linecap="round"/>
<path d="M824.2,260.9H836.6L830.4000000000001,267.09999999999997Z" fill="#343a40"/>
<path d="M882.4,255V272" stroke="#343a40" stroke-width="2.2"/><path d="M878.6,270.2H886.2L882.4,276Z" fill="#343a40"/>
<rect x="889.2" y="255.2" width="4.2" height="2.8" fill="#343a40"/>
<rect x="889.2" y="260.6" width="6.4" height="2.8" fill="#343a40"/>
<rect x="889.2" y="266.2" width="8.6" height="2.8" fill="#343a40"/>
<rect x="889.2" y="272.6" width="11.2" height="2.8" fill="#343a40"/>
<path d="M940.5,255V271.5" stroke="#343a40" stroke-width="2.8"/><path d="M936.4,270.8H944.6L940.5,276.2Z" fill="#343a40"/>
<path d="M947.9,263.7L950.9,255.6L954.3,263.7M949,260.9H953.2" fill="none" stroke="#343a40" stroke-width="1.5"/>
<path d="M946.4,263.6H949.4M952.8,263.6H955.8" stroke="#343a40" stroke-width="1.2"/>
<path d="M947.7,269.6V267.6H954.4L947.6,275.2H954.6V272.8" fill="none" stroke="#343a40" stroke-width="1.6"/>
<path d="M967.2,260.9H979.6L973.4000000000001,267.09999999999997Z" fill="#343a40"/>
<path d="M1025.6,262.4A7.6,7.6 0 1,1 1025.2,270.2" fill="none" stroke="#c4c4c4" stroke-width="2.4"/>
<path d="M1022.2,257.4V265.2H1030Z" fill="#c4c4c4"/>
<path d="M1057.3,261H1070.3L1063.8,267.2Z" fill="#c4c4c4"/>
<ellipse cx="1112.9" cy="262.4" rx="5.4" ry="4.6" transform="rotate(-40 1112.9 262.4)" fill="none" stroke="#343a40" stroke-width="2.1"/>
<path d="M1116.4,266.2L1124.4,274.3M1122.6,266.2L1125.6,269.2M1121.4,270.5L1124,268" fill="none" stroke="#343a40" stroke-width="2.1" stroke-linecap="round"/>
<rect x="1164.8" y="257.2" width="17.4" height="16.2" rx="1.2" fill="none" stroke="#343a40" stroke-width="1.4"/>
<rect x="1164.2" y="256.5" width="18.6" height="2.8" rx="1" fill="#343a40"/><path d="M1173.5,258V273" stroke="#343a40" stroke-width="1.4"/>
<path d="M1194.3,260.9H1206.7L1200.5,267.09999999999997Z" fill="#343a40"/>
<rect x="1257.3" y="255.5" width="4.8" height="4.6" rx="1.2" fill="#343a40"/>
<rect x="1257.3" y="262.3" width="4.8" height="4.6" rx="1.2" fill="#343a40"/>
<rect x="1257.3" y="269.09999999999997" width="4.8" height="4.6" rx="1.2" fill="#343a40"/>
<path d="M1284.4,260.9H1296.8000000000002L1290.6000000000001,267.09999999999997Z" fill="#343a40"/>
<path d="M1339,260.2H1355.8" stroke="#e8455c" stroke-width="2"/><path d="M1344.4,260V257.4H1350.4V260" fill="none" stroke="#e8455c" stroke-width="1.8"/>
<path d="M1340.8,261V273.4Q1340.8,275 1342.4,275H1352.4Q1354,275 1354,273.4V261" fill="none" stroke="#e8455c" stroke-width="1.9"/>
<path d="M1344.6,263.6V272.2M1347.4,263.6V272.2M1350.2,263.6V272.2" stroke="#e8455c" stroke-width="1.4"/>
<circle cx="1407.7" cy="265.5" r="8.9" fill="#212529"/>
<path d="M1404.6,263.4Q1404.8,259.8 1407.9,259.8Q1411,259.8 1411,262.6Q1411,264.4 1408.8,265.4Q1407.8,266 1407.8,267.6" fill="none" stroke="#fff" stroke-width="2.4"/>
<rect x="1406.5" y="269.2" width="2.6" height="2.6" fill="#fff"/>
<path d="M1181.6,290.6V273.4C1181.6,270.6 1185.8,270.6 1185.8,273.4V280.6C1185.8,278.4 1190,278.4 1190,280.6V281.6C1190,279.4 1194,279.4 1194,281.6V282.6C1194,280.4 1198,280.4 1198,282.6V292C1198,298 1194,302.6 1188.4,302.6C1184,302.6 1181.4,300.4 1178.6,297L1173.6,291.4C1172.2,289.8 1173.4,287.6 1175.8,288C1178,288.4 1180,289.6 1181.6,290.6Z" fill="#fff" stroke="#000" stroke-width="1.1" stroke-linejoin="round"/>
<path d="M1185.8,280.6V286.4M1190,281.6V286.4M1194,282.6V286.4" stroke="#000" stroke-width="1"/>
<g fill="#343a40"><path d="M914.20,312.80L915.40,308.60L917.20,309.30L919.00,308.60L920.20,312.80Z"/><rect x="911.80" y="312.00" width="10.8" height="1.9" rx="0.9"/><rect x="912.40" y="315.00" width="9.6" height="1.8" rx="0.6"/><path d="M910.60,323.00C910.60,319.40 912.00,317.00 914.60,317.00H919.80C922.40,317.00 923.80,319.40 923.80,323.00Q923.80,324.20 922.60,324.20H911.80Q910.60,324.20 910.60,323.00Z"/></g>
<path d="M914.80,317.40L916.20,323.80H916.80L916.40,318.60ZM919.60,317.40L918.20,323.80H917.60L918.00,318.60Z" fill="#e8e8e8"/>
<rect x="914.20" y="313.90" width="2.2" height="1.3" fill="#eee"/><rect x="918.00" y="313.90" width="2.2" height="1.3" fill="#eee"/>
<g fill="#343a40"><path d="M1119.20,312.80L1120.40,308.60L1122.20,309.30L1124.00,308.60L1125.20,312.80Z"/><rect x="1116.80" y="312.00" width="10.8" height="1.9" rx="0.9"/><rect x="1117.40" y="315.00" width="9.6" height="1.8" rx="0.6"/><path d="M1115.60,323.00C1115.60,319.40 1117.00,317.00 1119.60,317.00H1124.80C1127.40,317.00 1128.80,319.40 1128.80,323.00Q1128.80,324.20 1127.60,324.20H1116.80Q1115.60,324.20 1115.60,323.00Z"/></g>
<path d="M1119.80,317.40L1121.20,323.80H1121.80L1121.40,318.60ZM1124.60,317.40L1123.20,323.80H1122.60L1123.00,318.60Z" fill="#e8e8e8"/>
<rect x="1119.20" y="313.90" width="2.2" height="1.3" fill="#eee"/><rect x="1123.00" y="313.90" width="2.2" height="1.3" fill="#eee"/>
<g fill="#343a40"><path d="M1362.80,312.80L1364.00,308.60L1365.80,309.30L1367.60,308.60L1368.80,312.80Z"/><rect x="1360.40" y="312.00" width="10.8" height="1.9" rx="0.9"/><rect x="1361.00" y="315.00" width="9.6" height="1.8" rx="0.6"/><path d="M1359.20,323.00C1359.20,319.40 1360.60,317.00 1363.20,317.00H1368.40C1371.00,317.00 1372.40,319.40 1372.40,323.00Q1372.40,324.20 1371.20,324.20H1360.40Q1359.20,324.20 1359.20,323.00Z"/></g>
<path d="M1363.40,317.40L1364.80,323.80H1365.40L1365.00,318.60ZM1368.20,317.40L1366.80,323.80H1366.20L1366.60,318.60Z" fill="#e8e8e8"/>
<rect x="1362.80" y="313.90" width="2.2" height="1.3" fill="#eee"/><rect x="1366.60" y="313.90" width="2.2" height="1.3" fill="#eee"/>
<g fill="#343a40"><path d="M1662.40,312.80L1663.60,308.60L1665.40,309.30L1667.20,308.60L1668.40,312.80Z"/><rect x="1660.00" y="312.00" width="10.8" height="1.9" rx="0.9"/><rect x="1660.60" y="315.00" width="9.6" height="1.8" rx="0.6"/><path d="M1658.80,323.00C1658.80,319.40 1660.20,317.00 1662.80,317.00H1668.00C1670.60,317.00 1672.00,319.40 1672.00,323.00Q1672.00,324.20 1670.80,324.20H1660.00Q1658.80,324.20 1658.80,323.00Z"/></g>
<path d="M1663.00,317.40L1664.40,323.80H1665.00L1664.60,318.60ZM1667.80,317.40L1666.40,323.80H1665.80L1666.20,318.60Z" fill="#e8e8e8"/>
<rect x="1662.40" y="313.90" width="2.2" height="1.3" fill="#eee"/><rect x="1666.20" y="313.90" width="2.2" height="1.3" fill="#eee"/>
<rect x="104" y="343.2" width="15" height="14.6" rx="3" fill="none" stroke="#212529" stroke-width="1.9"/>
<path d="M107.4,350.6H115.6" stroke="#212529" stroke-width="1.9"/>
<path d="M1693.8,311H1705L1699.4,305Z" fill="#a3a3a3"/>
<path d="M1693.8,986.6H1705L1699.4,993Z" fill="#505050"/>
<path d="M31.4,1009.8V1021L25,1015.4Z" fill="#a3a3a3"/>
<path d="M1671.2,1009.8V1021L1677.8,1015.4Z" fill="#505050"/></svg>
</body></html>
